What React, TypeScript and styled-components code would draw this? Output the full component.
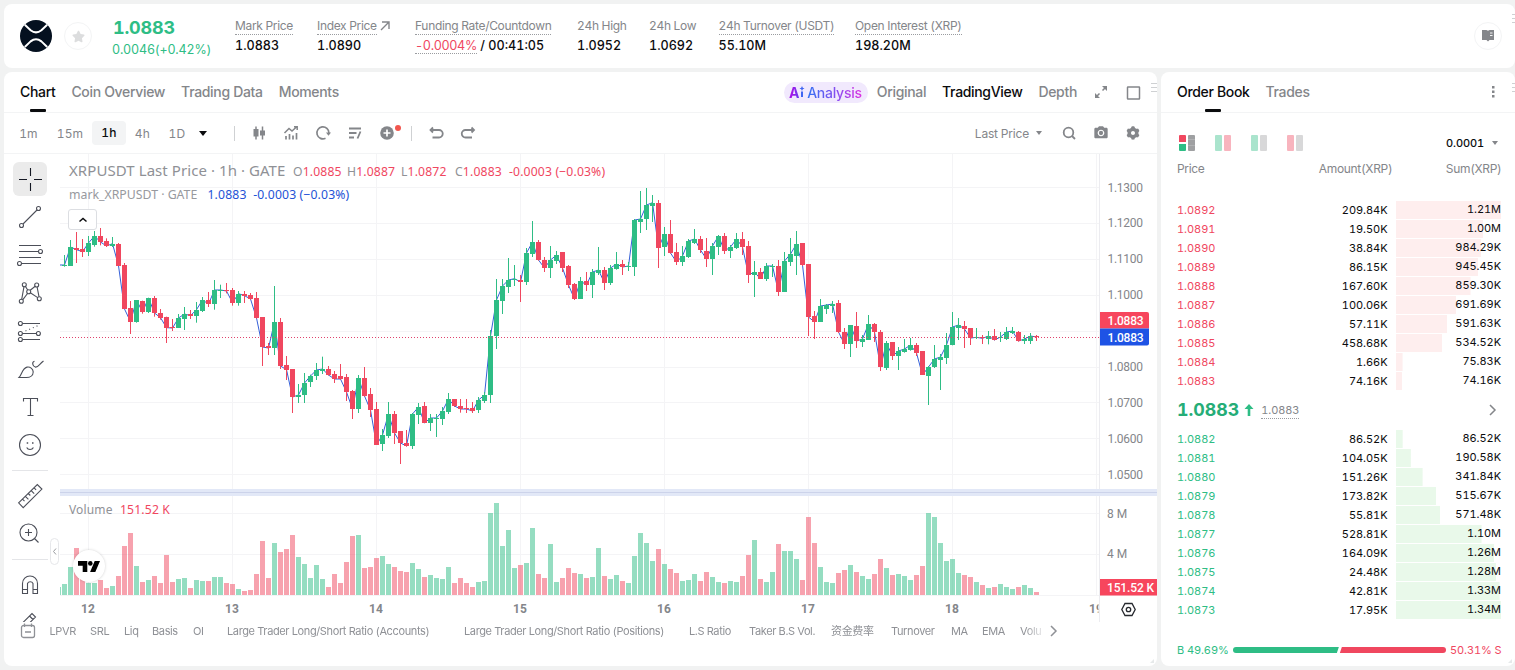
import type { ReactNode } from 'react';
import styled, { createGlobalStyle } from 'styled-components';
import { MdPhotoCamera } from 'react-icons/md';
import { RiSettings3Fill } from 'react-icons/ri';
import { FaStar } from 'react-icons/fa';

const GREEN = '#2ebd85';
const RED = '#f0475f';
const GREY = '#84868a';
const UI_FONT = 'Inter, "Liberation Sans", "Noto Sans CJK SC", sans-serif';
const CHART_FONT = '"Noto Sans", "Open Sans", sans-serif';

// [up, wick top, body top, body bottom, wick bottom, volume], in thirds of a pixel
const CANDLES: number[][] = [
  [1, 315, 345, 347, 350, 33], [1, 270, 291, 347, 347, 84], [0, 246, 294, 299, 339, 141], [0, 267, 297, 305, 321, 55],
  [1, 258, 279, 305, 318, 36], [1, 243, 258, 284, 290, 36], [0, 234, 258, 276, 286, 45], [0, 265, 273, 288, 291, 21],
  [1, 261, 281, 288, 291, 27], [0, 279, 282, 347, 347, 57], [0, 339, 345, 477, 477, 147], [0, 453, 474, 515, 552, 186],
  [1, 450, 450, 516, 518, 87], [0, 452, 453, 486, 491, 39], [1, 443, 444, 486, 489, 45], [0, 438, 444, 489, 500, 57],
  [0, 477, 489, 503, 509, 36], [0, 500, 501, 533, 579, 120], [0, 507, 530, 534, 543, 39], [1, 492, 504, 533, 534, 48],
  [1, 471, 492, 507, 540, 51], [0, 480, 493, 497, 507, 21], [1, 456, 479, 498, 518, 45], [1, 441, 450, 483, 486, 42],
  [0, 426, 450, 462, 471, 42], [1, 390, 420, 462, 479, 54], [1, 404, 420, 422, 444, 54], [0, 399, 420, 423, 430, 36],
  [0, 414, 420, 458, 467, 33], [1, 423, 431, 459, 467, 18], [0, 423, 432, 437, 459, 12], [0, 429, 435, 447, 449, 15],
  [0, 426, 444, 504, 506, 63], [0, 501, 501, 591, 648, 162], [0, 579, 588, 594, 615, 51], [1, 408, 516, 594, 615, 156],
  [0, 504, 516, 648, 657, 129], [0, 618, 645, 659, 690, 138], [0, 657, 657, 741, 789, 180], [1, 702, 735, 741, 759, 114],
  [1, 669, 699, 735, 759, 93], [1, 674, 678, 696, 711, 51], [1, 639, 660, 678, 690, 90], [1, 620, 657, 663, 672, 48],
  [0, 648, 657, 675, 677, 24], [0, 663, 672, 687, 699, 63], [0, 642, 678, 687, 689, 36], [0, 672, 681, 726, 753, 99],
  [0, 720, 723, 777, 807, 177], [1, 675, 684, 777, 789, 180], [0, 651, 684, 738, 740, 81], [0, 714, 732, 780, 801, 84],
  [0, 756, 777, 885, 885, 111], [1, 837, 855, 882, 903, 117], [1, 756, 792, 858, 864, 93], [0, 783, 792, 849, 882, 84],
  [0, 843, 843, 879, 942, 72], [0, 840, 879, 888, 890, 69], [1, 789, 792, 888, 897, 96], [1, 759, 771, 795, 822, 78],
  [0, 756, 768, 819, 819, 54], [1, 792, 804, 819, 843, 60], [1, 792, 804, 807, 861, 51], [1, 771, 783, 807, 825, 48],
  [1, 729, 747, 786, 792, 84], [0, 747, 747, 768, 771, 36], [0, 747, 768, 777, 788, 51], [0, 747, 774, 777, 789, 36],
  [0, 756, 774, 783, 789, 24], [1, 741, 750, 780, 789, 39], [1, 726, 735, 753, 759, 42], [1, 540, 558, 735, 759, 246],
  [1, 387, 450, 558, 597, 276], [1, 387, 408, 453, 492, 147], [1, 324, 390, 411, 429, 195], [1, 345, 386, 389, 408, 81],
  [0, 375, 390, 396, 456, 90], [1, 294, 309, 396, 405, 96], [1, 213, 276, 312, 321, 201], [0, 270, 276, 330, 332, 63],
  [0, 321, 330, 354, 366, 51], [1, 288, 330, 354, 384, 153], [1, 303, 315, 333, 342, 39], [0, 306, 306, 354, 366, 51],
  [0, 345, 348, 405, 414, 81], [0, 399, 402, 447, 450, 66], [1, 381, 393, 447, 447, 63], [0, 366, 393, 405, 423, 51],
  [1, 357, 366, 405, 444, 54], [1, 291, 360, 369, 375, 141], [0, 351, 360, 399, 420, 57], [1, 345, 354, 399, 405, 48],
  [1, 306, 342, 357, 359, 60], [0, 330, 342, 351, 375, 42], [1, 336, 348, 351, 363, 36], [1, 207, 210, 351, 378, 117],
  [1, 123, 207, 216, 249, 186], [1, 114, 165, 207, 240, 156], [1, 135, 158, 168, 216, 102], [0, 150, 159, 294, 354, 138],
  [1, 231, 252, 291, 318, 93], [0, 210, 252, 309, 311, 78], [0, 279, 306, 336, 345, 66], [1, 288, 318, 336, 348, 42],
  [1, 267, 273, 321, 324, 45], [1, 237, 267, 279, 282, 63], [0, 258, 267, 300, 309, 42], [0, 264, 303, 327, 351, 69],
  [1, 279, 288, 327, 375, 54], [1, 255, 258, 291, 315, 39], [0, 249, 258, 303, 312, 36], [1, 285, 291, 303, 324, 42],
  [1, 249, 267, 294, 297, 39], [0, 246, 267, 291, 315, 57], [0, 273, 288, 375, 399, 120], [1, 333, 366, 375, 441, 165],
  [0, 354, 366, 387, 387, 48], [1, 339, 348, 387, 393, 39], [1, 342, 348, 351, 381, 69], [0, 330, 348, 426, 438, 153],
  [1, 306, 333, 426, 426, 132], [1, 264, 312, 336, 348, 132], [1, 243, 282, 318, 375, 108], [0, 279, 279, 345, 348, 45],
  [0, 342, 342, 501, 558, 234], [0, 483, 498, 516, 567, 156], [1, 447, 468, 516, 516, 84], [1, 462, 465, 477, 492, 39],
  [1, 453, 462, 468, 489, 36], [0, 450, 459, 546, 549, 66], [0, 534, 546, 582, 597, 75], [1, 525, 525, 582, 621, 90],
  [0, 486, 528, 573, 594, 69], [1, 555, 567, 576, 591, 57], [1, 495, 522, 570, 570, 48], [0, 519, 522, 546, 576, 63],
  [0, 540, 546, 651, 663, 108], [1, 573, 579, 654, 660, 81], [0, 576, 576, 618, 630, 60], [1, 591, 603, 618, 660, 63],
  [1, 567, 597, 606, 608, 57], [1, 564, 585, 600, 602, 45], [0, 579, 585, 609, 618, 60], [0, 603, 603, 675, 675, 87],
  [1, 648, 651, 678, 765, 246], [1, 585, 627, 651, 654, 234], [1, 612, 621, 630, 720, 156], [1, 549, 585, 624, 642, 102],
  [1, 486, 531, 585, 586, 108], [1, 504, 525, 534, 570, 66], [0, 513, 528, 537, 594, 60], [0, 534, 534, 564, 585, 54],
  [1, 534, 562, 564, 567, 39], [0, 555, 562, 565, 582, 30], [1, 543, 558, 567, 583, 21], [0, 537, 558, 570, 571, 24],
  [1, 546, 561, 564, 576, 33], [1, 531, 546, 567, 570, 24], [1, 531, 543, 549, 552, 18], [0, 543, 546, 573, 575, 24],
  [1, 555, 567, 573, 582, 30], [1, 549, 558, 573, 582, 21], [0, 555, 558, 561, 573, 9],
];

const PRICE_LINES = ['1.1300', '1.1200', '1.1100', '1.1000', '', '1.0800', '1.0700', '1.0600', '1.0500'];
const DAYS = ['12', '13', '14', '15', '16', '17', '18', '19'];

// price, amount, running sum, running sum in thousands
type Level = [string, string, string, number];

const ASKS: Level[] = [
  ['1.0892', '209.84K', '1.21M', 1210],
  ['1.0891', '19.50K', '1.00M', 1003],
  ['1.0890', '38.84K', '984.29K', 984],
  ['1.0889', '86.15K', '945.45K', 945],
  ['1.0888', '167.60K', '859.30K', 859],
  ['1.0887', '100.06K', '691.69K', 692],
  ['1.0886', '57.11K', '591.63K', 592],
  ['1.0885', '458.68K', '534.52K', 535],
  ['1.0884', '1.66K', '75.83K', 76],
  ['1.0883', '74.16K', '74.16K', 74],
];

const BIDS: Level[] = [
  ['1.0882', '86.52K', '86.52K', 86],
  ['1.0881', '104.05K', '190.58K', 191],
  ['1.0880', '151.26K', '341.84K', 342],
  ['1.0879', '173.82K', '515.67K', 516],
  ['1.0878', '55.81K', '571.48K', 571],
  ['1.0877', '528.81K', '1.10M', 1100],
  ['1.0876', '164.09K', '1.26M', 1264],
  ['1.0875', '24.48K', '1.28M', 1289],
  ['1.0874', '42.81K', '1.33M', 1331],
  ['1.0873', '17.95K', '1.34M', 1349],
];

const INDICATORS = [
  'LPVR', 'SRL', 'Liq', 'Basis', 'OI', 'Large Trader Long/Short Ratio (Accounts)',
  'Large Trader Long/Short Ratio (Positions)', 'L.S Ratio', 'Taker B.S Vol.', '资金费率', 'Turnover', 'MA', 'EMA', 'Volu',
];

const GlobalStyle = createGlobalStyle`
  * { box-sizing: border-box; }
  body {
    margin: 0;
    background: #f1f2f2;
    font-family: ${UI_FONT};
    font-variant-numeric: tabular-nums;
    color: #0b0c0e;
    overflow: hidden;
  }
  svg { display: block; flex: none; }
`;

const Page = styled.div`
  width: 1515px;
  height: 670px;
  padding: 4px 0 4px 4px;
  display: grid;
  grid-template: 64px 594px / 1153px 1fr;
  gap: 4px;
`;

const Card = styled.section`
  background: #fff;
  border-radius: 8px;
  overflow: hidden;
  min-width: 0;
`;

const Header = styled(Card)`
  grid-column: 1 / -1;
  display: flex;
  align-items: center;
  padding-left: 16px;
  position: relative;
`;

const RoundButton = styled.div`
  width: 28px;
  height: 28px;
  border: 1px solid #f3f4f5;
  border-radius: 50%;
  display: flex;
  align-items: center;
  justify-content: center;
  color: #dcddde;
`;

const StarButton = styled(RoundButton)`
  margin: 0 21px 0 12px;
`;

const GuideButton = styled(RoundButton)`
  margin: 0 13px 0 auto;
  color: ${GREY};
`;

const Quote = styled.div`
  width: 122px;
  color: ${GREEN};
`;

const QuotePrice = styled.div`
  font-size: 18px;
  font-weight: 700;
  line-height: 24px;
  letter-spacing: -0.2px;
  padding-top: 3px;
`;

const QuoteChange = styled.div`
  font-size: 12.5px;
  letter-spacing: -0.18px;
  line-height: 20px;
  margin-left: -1px;
`;

const Stats = styled.dl`
  margin: 0 0 2px;
  display: grid;
  grid-template-columns: 82px 98px 162px 72px 69.5px 136.5px auto;
`;

const Stat = styled.div`
  white-space: nowrap;
`;

const StatLabel = styled.dt<{ $dotted?: boolean }>`
  display: flex;
  gap: 3px;
  font-size: 12px;
  line-height: 17px;
  letter-spacing: -0.32px;
  color: ${GREY};

  span {
    height: 18px;
    border-bottom: 1px ${p => (p.$dotted ? 'dotted #9a9ca0' : 'solid transparent')};
  }
`;

const StatValue = styled.dd`
  margin: 0;
  padding-top: 2px;
  font-size: 12.6px;
  font-weight: 500;
  line-height: 17px;

  em {
    display: inline-block;
    height: 17px;
    border-bottom: 1px dotted #9a9ca0;
    font-style: normal;
    font-weight: 400;
    letter-spacing: -0.35px;
    color: ${RED};
  }
`;

const Grip = styled.div<{ $right: number; $top: number }>`
  position: absolute;
  right: ${p => p.$right}px;
  top: ${p => p.$top}px;
  width: 6px;
  height: 10px;
  background: repeating-linear-gradient(#cfd1d3 0 1px, transparent 1px 4px);
`;

const ResizeCorner = styled.div`
  position: absolute;
  right: 3px;
  bottom: 3px;
  border: 2px solid;
  border-color: transparent #e6e9ea #e6e9ea transparent;
`;

const Panel = styled(Card)`
  position: relative;
  display: flex;
  flex-direction: column;
`;

const TabBar = styled.nav`
  height: 41px;
  flex: none;
  padding: 0 16px;
  display: flex;
  gap: 16px;
  border-bottom: 1px solid #f3f4f5;
`;

const Tab = styled.span<{ $active?: boolean }>`
  position: relative;
  font-size: 14px;
  font-weight: 500;
  line-height: 40px;
  letter-spacing: -0.33px;
  white-space: nowrap;
  color: ${p => (p.$active ? '#0b0c0e' : GREY)};
`;

const MarkedTab = styled(Tab)`
  &::after {
    content: '';
    position: absolute;
    left: calc(50% - 8px);
    top: 37px;
    width: 16px;
    height: 3px;
    border-radius: 1px;
    background: #0b0c0e;
  }
`;

const Views = styled.div`
  margin-left: auto;
  display: flex;
  align-items: center;
  gap: 16px;
  color: ${GREY};
`;

const AiPill = styled.span`
  height: 21px;
  margin-right: -7px;
  padding: 0 6px 0 5px;
  display: flex;
  align-items: center;
  border-radius: 11px;
  background: #f1e9fd;
  font-size: 14px;
  font-weight: 500;
  letter-spacing: -0.25px;

  b {
    font-weight: 700;
    background: linear-gradient(90deg, #a316e8 30%, #6a3cf0);
    background-clip: text;
    color: transparent;
  }
  svg {
    margin-right: 2px;
    color: #3f66f2;
  }
  span {
    background: linear-gradient(90deg, #3071f3, #8a4cf0 55%, #dd2fe0);
    background-clip: text;
    color: transparent;
  }
`;

const Toolbar = styled.div`
  height: 41px;
  flex: none;
  display: flex;
  align-items: center;
  border-bottom: 1px solid #f3f4f5;
  padding-right: 16px;
  color: ${GREY};
`;

const Intervals = styled.div`
  display: grid;
  grid-template-columns: 41px 42px 36px 31px 38px 14px;
  align-items: center;
  justify-items: center;
  margin: 0 24px 0 4px;
  font-size: 12px;
  letter-spacing: 0.2px;
`;

const ActiveInterval = styled.span`
  width: 34px;
  height: 24px;
  border-radius: 4px;
  background: #f3f4f5;
  line-height: 24px;
  text-align: center;
  font-weight: 500;
  color: #0b0c0e;
`;

const Caret = styled.i<{ $size: number; $color: string }>`
  border: ${p => p.$size}px solid transparent;
  border-top: ${p => p.$size + 1}px solid ${p => p.$color};
  border-bottom: 0;
`;

const Divider = styled.i`
  width: 1px;
  height: 15px;
  background: #cfd1d3;
`;

const Tools = styled.div`
  display: flex;
  align-items: center;
  gap: 16px;
  margin: 0 16px;
`;

const Notified = styled.div`
  position: relative;

  &::after {
    content: '';
    position: absolute;
    right: -6px;
    top: 0;
    width: 6px;
    height: 6px;
    border-radius: 50%;
    background: #f2564e;
  }
`;

const PriceSource = styled.div`
  margin-left: auto;
  display: flex;
  align-items: center;
  gap: 7px;
  font-size: 12px;
  letter-spacing: -0.2px;
`;

const ToolbarRight = styled.div`
  display: flex;
  gap: 16px;
  margin-left: 19px;
`;

const ChartArea = styled.div`
  height: 468px;
  flex: none;
  display: flex;
  position: relative;
`;

const Rail = styled.aside`
  width: 56px;
  padding: 8px 0 0 9px;
  display: flex;
  flex-direction: column;
  gap: 4px;
  overflow: hidden;
`;

const RailButton = styled.div<{ $active?: boolean }>`
  width: 34px;
  height: 34px;
  flex: none;
  border-radius: 6px;
  background: ${p => (p.$active ? '#ebebeb' : 'transparent')};
  color: ${p => (p.$active ? '#131722' : '#4c4f59')};
`;

const RailRule = styled.hr`
  width: 36px;
  flex: none;
  margin: 4px 0 4px -1px;
  border: 0;
  border-top: 1px solid #e4e5e8;
`;

const RailHandle = styled.div`
  position: absolute;
  left: 46px;
  top: 384px;
  width: 9px;
  height: 27px;
  border: 1px solid #e6e7ea;
  border-radius: 5px;
  background: #fff;
  color: #9a9ca0;
`;

const Legend = styled.div<{ $top: number; $color: string }>`
  position: absolute;
  left: 65px;
  top: ${p => p.$top}px;
  display: flex;
  align-items: baseline;
  line-height: 20px;
  font-family: ${CHART_FONT};
  font-size: 12.2px;
  letter-spacing: 0.15px;
  white-space: nowrap;
  color: ${p => p.$color};

  i {
    font-style: normal;
    color: #8f9196;
  }
`;

const SymbolName = styled.span`
  width: 224px;
  font-size: 15px;
  letter-spacing: 0.07px;
  color: #8f9196;
`;

const MarkName = styled.span`
  width: 138.5px;
  font-size: 12.3px;
  letter-spacing: 0;
  color: #97999e;
`;

const VolumeName = styled.span`
  width: 51px;
  font-size: 12px;
  color: #8f9196;
`;

const Ohlc = styled.span`
  width: 54px;
`;

const LegendToggle = styled.div`
  position: absolute;
  left: 64px;
  top: 55px;
  width: 29px;
  height: 21px;
  border: 1px solid #dcdee2;
  border-radius: 3px;
  background: #fff;
  display: flex;
  align-items: center;
  justify-content: center;
`;

const ChartLogo = styled.div`
  position: absolute;
  left: 69px;
  top: 396px;
  width: 32px;
  height: 32px;
  border-radius: 50%;
  background: #fff;
  box-shadow: 0 0 3px rgba(0, 0, 0, 0.18);
  display: flex;
  align-items: center;
  justify-content: center;
`;

const IndicatorBar = styled.div`
  display: flex;
  align-items: center;
  height: 18px;
  color: #8f9196;
`;

const CalendarSlot = styled.div`
  padding-left: 16px;
  width: 32px;
`;

const IndicatorList = styled.div`
  margin-left: 13.5px;
  width: 997px;
  overflow: hidden;
  display: grid;
  grid-template-columns: 40.5px 34px 28px 41px 34px 237px 225px 60px 82px 60px 60px 31px 38px 26px;
  font-size: 11px;
  letter-spacing: -0.37px;
  line-height: 18px;
  white-space: nowrap;
  mask-image: linear-gradient(90deg, #000 975px, transparent);
`;

const BookModes = styled.div`
  display: flex;
  align-items: center;
  height: 16px;
  margin: 22px 17px 0 18px;
  gap: 20px;
`;

const Mode = styled.span<{ $left: string; $right: string; $dim?: boolean }>`
  display: flex;
  gap: 2px;
  opacity: ${p => (p.$dim ? 0.4 : 1)};

  &::before,
  &::after {
    content: '';
    width: 7px;
    height: 16px;
    border-radius: 1px;
    background: ${p => p.$left};
  }
  &::after {
    background: ${p => p.$right};
  }
`;

const Precision = styled.span`
  margin-left: auto;
  display: flex;
  align-items: center;
  gap: 8px;
  font-size: 11px;
  font-weight: 500;
  letter-spacing: -0.1px;
`;

const BookColumns = styled.div`
  display: grid;
  grid-template-columns: 100px 115.3px 109.2px;
  margin: 9px 0 0 16px;
  line-height: 18px;
  font-size: 12px;
  letter-spacing: -0.32px;
  color: ${GREY};

  span + span {
    text-align: right;
  }
`;

const BookSide = styled.div<{ $color: string; $tint: string }>`
  display: grid;
  grid-auto-rows: 19px;
  color: ${p => p.$color};
  --tint: ${p => p.$tint};
`;

const AskSide = styled(BookSide)`
  margin-top: 23px;
`;

const BookRow = styled.div`
  display: grid;
  grid-template-columns: 100px 110.5px 8.5px 105px;
  margin-left: 16px;
  font-size: 11px;
  line-height: 19px;
  letter-spacing: -0.05px;
`;

const Amount = styled.span`
  grid-column: 2;
  text-align: right;
  color: #0b0c0e;
`;

const Depth = styled.span`
  grid-column: 4;
  height: 18px;
  line-height: 17px;
  text-align: right;
  color: #0b0c0e;
  background: linear-gradient(var(--tint), var(--tint)) no-repeat;
`;

const LastTrade = styled.div`
  display: flex;
  align-items: center;
  height: 39px;
  margin: 0 15px 0 16px;
  padding-bottom: 1px;
  color: ${GREY};
`;

const LastPrice = styled.strong`
  font-size: 17.8px;
  line-height: 24px;
  color: #25ad77;
  margin-right: 5px;
`;

const MarkPrice = styled.span`
  margin: 0 auto 0 7px;
  height: 17px;
  font-size: 11px;
  line-height: 16px;
  letter-spacing: -0.1px;
  border-bottom: 1px dotted #9a9ca0;
`;

const Ratio = styled.div`
  display: flex;
  align-items: center;
  margin: 20px 13px 0 16px;
  font-size: 11px;
  line-height: 20px;
`;

const RatioLabel = styled.span<{ $color: string; $width: number }>`
  width: ${p => p.$width}px;
  white-space: nowrap;
  letter-spacing: -0.1px;
  color: ${p => p.$color};
`;

const RatioBar = styled.div`
  flex: 1;
  display: flex;
  height: 6px;
  margin-right: 4px;
`;

const BuyShare = styled.i`
  flex: 49.69;
  background: ${GREEN};
  border-radius: 3px 0 0 3px;
  clip-path: polygon(0 0, 100% 0, calc(100% - 2px) 100%, 0 100%);
`;

const SellShare = styled.i`
  flex: 50.31;
  background: ${RED};
  border-radius: 0 3px 3px 0;
  clip-path: polygon(3px 0, 100% 0, 100% 100%, 1px 100%);
`;

const Icon = ({ size = 16, width = 1.5, children }: { size?: number; width?: number; children: ReactNode }) => (
  <svg width={size} height={size} viewBox={`0 0 ${size} ${size}`} fill="none" stroke="currentColor" strokeWidth={width}>
    {children}
  </svg>
);

const XrpLogo = () => (
  <svg width="32" height="32" viewBox="0 0 32 32">
    <circle cx="16" cy="16" r="16" fill="#04101f" />
    <g fill="none" stroke="#fff" strokeWidth="2">
      <path d="M4.8 4.8 10.6 10.2Q16 14.6 21.4 10.2L27.2 4.8" />
      <path d="M4.8 27 10.6 21.4Q16 17 21.4 21.4L27.2 27" />
    </g>
  </svg>
);

const DRAW_TOOLS: ReactNode[] = [
  <path d="M17.5 6v8M17.5 21v8M6 17.5h8M21 17.5h8" />,
  <>
    <circle cx="8.5" cy="25.5" r="2" />
    <circle cx="25.5" cy="8.5" r="2" />
    <path d="M10 24 24 10" />
  </>,
  <>
    <path d="M6 7.5h22M6 13.5h19.5M6 19.5h22M8.5 25.5H28" />
    <circle cx="27.5" cy="13.5" r="2" />
    <circle cx="6.5" cy="25.5" r="2" />
  </>,
  <>
    <path d="m8.7 23.3 2.3-12.6M12.5 10.5l2.2 3.5M17.2 14.2l5-4M24.1 11l1.9 9.6M9.7 23.8l4.8-6.3M17.3 16.8l7.4 4.8" />
    <circle cx="11.3" cy="8.7" r="2" />
    <circle cx="23.7" cy="9" r="2" />
    <circle cx="15.7" cy="15.7" r="2" />
    <circle cx="8.3" cy="25.3" r="2" />
    <circle cx="26.3" cy="22.7" r="2" />
  </>,
  <>
    <path d="M9.5 9.5H27M9.5 19.5h14M9.5 25.5H27" />
    <path d="m12.5 17 14-6" strokeDasharray="1 3" />
    <circle cx="7.4" cy="9.5" r="2" />
    <circle cx="7.4" cy="19.5" r="2" />
    <circle cx="25.4" cy="19.5" r="2" />
    <circle cx="7.4" cy="25.5" r="2" />
  </>,
  <>
    <path d="M6 25.5C9 22.5 9 16.5 14 15.1a5.2 5.2 0 0 1 6.2 4.8c0 3.6-3.2 5.6-6.7 5.6z" />
    <path d="M21.5 9.2c-3 .6-1.9 5 .8 5.9C25 15.8 26 12.5 30.5 9" />
  </>,
  <path d="M10.5 11.5v-3h14v3M17.5 8.5v17M14.5 25.5h6" />,
  <>
    <circle cx="17" cy="17" r="10.5" />
    <path d="M13.7 19.5c1.2 2.6 5.5 2.6 6.7 0" />
    <path d="M13.7 15h1.5M19 15h1.5" strokeWidth="1.6" />
  </>,
];

const MEASURE_TOOLS: ReactNode[] = [
  <path d="M5.6 23.8 24.3 5.5l4.6 4.6L10.2 28.6zM9.5 20.2l2 2M12.4 17.3l3 3M15.3 14.5l2 2M18.2 11.6l3 3M21.1 8.8l2 2" />,
  <>
    <circle cx="15.5" cy="15.5" r="8.5" />
    <path d="M15.5 12v7M12 15.5h7M21.5 21.5l4 4" />
  </>,
];

const MODE_TOOLS: ReactNode[] = [
  <path d="M9.5 25.5v-10a7.5 7.5 0 0 1 15 0v10H20v-10a3 3 0 0 0-5.5 0v10zM9.5 21.5h5M20 21.5h4.5" />,
  <path d="M8 18.5 19 7.5l3.5 3.5-8 8M16.5 10l3.5 3.5M20.5 16.5h4" />,
];

const DrawingRail = () => (
  <Rail>
    {DRAW_TOOLS.map((icon, i) => (
      <RailButton key={i} $active={i === 0}><Icon size={34} width={1.1}>{icon}</Icon></RailButton>
    ))}
    <RailRule />
    {MEASURE_TOOLS.map((icon, i) => (
      <RailButton key={i}><Icon size={34} width={1.1}>{icon}</Icon></RailButton>
    ))}
    <RailRule />
    {MODE_TOOLS.map((icon, i) => (
      <RailButton key={i}><Icon size={34} width={1.1}>{icon}</Icon></RailButton>
    ))}
  </Rail>
);

const candleX = (i: number) => 64.5 + i * 6;
const candleY = (v: number) => 150 + v / 3;

const PriceChart = () => {
  const line = CANDLES.map(([up, , top, bottom], i) => `${candleX(i)},${candleY(up ? top : bottom)}`).join(' ');

  return (
    <svg width="1097" height="468" viewBox="60 154 1097 468" fontFamily="Roboto, sans-serif" fontSize="12" fill="#84868a">
      <g stroke="#f4f4f6">
        {PRICE_LINES.map((_, i) => (
          <path key={i} d={`M60 ${Math.round(187 + i * 35.9) + 0.5}H1099`} />
        ))}
        {DAYS.map((day, i) => (
          <path key={day} d={`M${88.5 + i * 144} 154V595`} />
        ))}
        <path d="M60 513.5H1099M60 554.5H1099M60 595.5H1157" />
        <path d="M1099.5 154V622" stroke="#ececf0" />
      </g>
      <rect x="60" y="489" width="1097" height="7" fill="#e2e8f7" />
      <path d="M60 492.5H1157" stroke="#ccd3ea" />

      <g opacity="0.5">
        <rect x="60" y="587" width="1" height="8" fill={GREEN} />
        {CANDLES.map(([up, , , , , volume], i) => (
          <rect key={i} x={candleX(i) - 2.5} y={595 - volume / 3} width="5" height={volume / 3} fill={up ? GREEN : RED} />
        ))}
      </g>

      <polyline points={`60,265 ${line}`} fill="none" stroke="#3560d8" />
      {CANDLES.map(([up, high, top, bottom, low], i) => (
        <g key={i} fill={up ? GREEN : RED}>
          <rect x={candleX(i) - 0.5} y={candleY(high)} width="1" height={(low - high) / 3} />
          <rect
            x={candleX(i) - 2.5}
            y={Math.round(candleY(top))}
            width="5"
            height={Math.max(1, Math.round(candleY(bottom)) - Math.round(candleY(top)))}
          />
        </g>
      ))}
      <path d="M60 337.5H1099" stroke="#e0426c" strokeDasharray="1 2" />

      {PRICE_LINES.map((label, i) => (
        <text key={i} x="1107.5" y={191.5 + i * 35.9} textLength={label ? 35.5 : undefined}>{label}</text>
      ))}
      <text x="1107" y="517.5">8 M</text>
      <text x="1107" y="557.5">4 M</text>
      <clipPath id="time-axis"><rect x="60" y="596" width="1038.5" height="26" /></clipPath>
      <g clipPath="url(#time-axis)" fontWeight="700" textAnchor="middle">
        {DAYS.map((day, i) => (
          <text key={day} x={88 + i * 144} y="613">{day}</text>
        ))}
      </g>

      <path d="M1100 312h47a2 2 0 0 1 2 2v14.5h-49z" fill="#f7465d" />
      <path d="M1100 328.5h49v15a2 2 0 0 1-2 2h-47z" fill="#1e53e5" />
      <rect x="1100" y="579" width="57" height="16.5" fill="#f7465d" />
      <g fill="#fff" fontWeight="500">
        <text x="1107.5" y="324.7" textLength="36">1.0883</text>
        <text x="1107.5" y="341.7" textLength="36">1.0883</text>
        <text x="1107" y="591.7" textLength="47">151.52 K</text>
      </g>
      <g fill="none" stroke="#26282e" strokeWidth="1.3">
        <path d="m1125 603.5h7l3.2 6-3.2 6h-7l-3.2-6z" />
        <circle cx="1128.5" cy="609.5" r="2.2" />
      </g>
    </svg>
  );
};

const ChartToolbar = () => (
  <Toolbar>
    <Intervals>
      <span>1m</span>
      <span>15m</span>
      <ActiveInterval>1h</ActiveInterval>
      <span>4h</span>
      <span>1D</span>
      <Caret $size={4} $color="#0b0c0e" />
    </Intervals>
    <Divider />
    <Tools>
      <Icon>
        <path d="M5 1.5v13M11.5 1.5v13" />
        <path d="M2.5 4h5v7.5h-5zM9 5.5h5v5H9z" fill="currentColor" stroke="none" />
      </Icon>
      <Icon>
        <path d="M1.5 8 6 3.5l3 2.5 5-4.5M11 1.8h3.2V5" />
        <path d="M3 11v3.5M6.5 9v5.5M10 10.5v4M13.5 8v6.5" strokeWidth="1.7" />
      </Icon>
      <Icon width={1.7}>
        <path d="M10.5 13.3A6 6 0 1 1 13.9 8" />
        <path d="M11 7.5h5l-2.5 3.2z" fill="currentColor" stroke="none" />
      </Icon>
      <Icon width={1.8}>
        <path d="M2 3.5h12M2 8h7.5M2 12.5h5M13.5 6.5l-3 7" />
      </Icon>
      <Notified>
        <Icon>
          <circle cx="8" cy="8" r="6.8" fill="currentColor" stroke="none" />
          <path d="M8 4.5v7M4.5 8h7" stroke="#fff" strokeWidth="1.7" />
        </Icon>
      </Notified>
    </Tools>
    <Divider />
    <Tools>
      <Icon width={1.8}>
        <path d="M2.5 5H11a3.3 3.3 0 0 1 0 7.5H4.5M5 2.5 2.5 5 5 7.5" />
      </Icon>
      <Icon width={1.8}>
        <path d="M14 5H5.500a3.3 3.3 0 0 0 0 7.5H12M11.5 2.5 14 5l-2.5 2.5" />
      </Icon>
    </Tools>
    <PriceSource>
      Last Price <Caret $size={3} $color={GREY} />
    </PriceSource>
    <ToolbarRight>
      <Icon width={1.8}>
        <circle cx="7.5" cy="7.5" r="4.8" />
        <path d="m11 11 3 3" />
      </Icon>
      <MdPhotoCamera size={16} />
      <RiSettings3Fill size={16} />
    </ToolbarRight>
  </Toolbar>
);

const ChartPanel = () => (
  <Panel>
    <TabBar>
      <MarkedTab $active>Chart</MarkedTab>
      <Tab>Coin Overview</Tab>
      <Tab>Trading Data</Tab>
      <Tab>Moments</Tab>
      <Views>
        <AiPill>
          <b>A</b>
          <svg width="6" height="12" viewBox="0 0 6 12" fill="currentColor">
            <path d="M2 5.5h2V11H2zM3 0l.8 1.7 1.7.8-1.7.8L3 5l-.8-1.7-1.7-.8 1.7-.8z" />
          </svg>
          <span>Analysis</span>
        </AiPill>
        <Tab>Original</Tab>
        <Tab $active>TradingView</Tab>
        <Tab>Depth</Tab>
        <Icon>
          <path d="M9.5 6.5 13 3M6.5 9.5 3 13" />
          <path d="M9 2h5v5zM2 9v5h5z" fill="currentColor" stroke="none" />
        </Icon>
        <Icon>
          <rect x="2.5" y="3" width="12" height="12" rx="0.5" />
        </Icon>
      </Views>
    </TabBar>
    <ChartToolbar />
    <ChartArea>
      <DrawingRail />
      <PriceChart />
      <Legend $top={6} $color={RED}>
        <SymbolName>XRPUSDT Last Price · 1h · GATE</SymbolName>
        <Ohlc><i>O</i>1.0885</Ohlc>
        <Ohlc><i>H</i>1.0887</Ohlc>
        <Ohlc><i>L</i>1.0872</Ohlc>
        <Ohlc><i>C</i>1.0883</Ohlc>
        <span>-0.0003 (−0.03%)</span>
      </Legend>
      <Legend $top={31} $color="#2453d6">
        <MarkName>mark_XRPUSDT · GATE</MarkName>
        <span>1.0883&nbsp; -0.0003 (−0.03%)</span>
      </Legend>
      <LegendToggle>
        <Icon size={10}><path d="M1.5 6.5 5 3.5l3.5 3" /></Icon>
      </LegendToggle>
      <Legend $top={346} $color={RED}>
        <VolumeName>Volume</VolumeName>
        <span>151.52 K</span>
      </Legend>
      <ChartLogo>
        <svg width="22" height="11" viewBox="0 0 22 11">
          <path d="M0 0h9.3v11H4.7V4.7H0zM16.7 0H22l-4.7 11h-5.2z" />
          <circle cx="12.3" cy="2.4" r="2.3" />
        </svg>
      </ChartLogo>
      <RailHandle>
        <svg width="7" height="25" viewBox="0 0 7 25" fill="none" stroke="currentColor">
          <path d="m5 9.5-2.5 3 2.5 3" />
        </svg>
      </RailHandle>
    </ChartArea>
    <IndicatorBar>
      <CalendarSlot>
        <Icon width={1.3}>
          <rect x="1.5" y="2.5" width="13" height="12" rx="2" />
          <path d="M4.5.5V4M11.5.5V4M5 9h6" />
        </Icon>
      </CalendarSlot>
      <IndicatorList>
        {INDICATORS.map(name => <span key={name}>{name}</span>)}
      </IndicatorList>
      <Icon><path d="m4 3 5 5-5 5" /></Icon>
    </IndicatorBar>
    <Grip $right={0} $top={11} />
    <ResizeCorner />
  </Panel>
);

const BookRows = ({ rows, max }: { rows: Level[]; max: number }) => (
  <>
    {rows.map(([price, amount, sum, depth]) => (
      <BookRow key={price}>
        <span>{price}</span>
        <Amount>{amount}</Amount>
        <Depth style={{ backgroundSize: `${(depth / max) * 100}% 100%` }}>{sum}</Depth>
      </BookRow>
    ))}
  </>
);

const OrderBook = () => (
  <Panel>
    <TabBar>
      <MarkedTab $active>Order Book</MarkedTab>
      <Tab>Trades</Tab>
      <Views>
        <svg width="12" height="16" viewBox="0 0 12 16" fill="currentColor">
          <path d="M5 2h2.5v2.5H5zM5 6.5h2.5V9H5zM5 11h2.5v2.5H5z" />
        </svg>
      </Views>
    </TabBar>
    <BookModes>
      <Mode
        $left={`linear-gradient(${RED} 7px, #fff 7px 9px, ${GREEN} 9px)`}
        $right="linear-gradient(#9fa0a2 4px, #b0b1b3 4px 5px, #9fa0a2 5px 10px, #b0b1b3 10px 11px, #9fa0a2 11px)"
      />
      <Mode $dim $left={GREEN} $right={RED} />
      <Mode $dim $left={GREEN} $right="#9fa0a2" />
      <Mode $dim $left={RED} $right="#9fa0a2" />
      <Precision>0.0001 <Caret $size={3} $color={GREY} /></Precision>
    </BookModes>
    <BookColumns>
      <span>Price</span>
      <span>Amount(XRP)</span>
      <span>Sum(XRP)</span>
    </BookColumns>
    <AskSide $color={RED} $tint="#feeeee"><BookRows rows={ASKS} max={1210} /></AskSide>
    <LastTrade>
      <LastPrice>1.0883</LastPrice>
      <svg width="10" height="14" viewBox="0 0 10 14" fill={GREEN}>
        <path d="M5 1l4.500 5H6.300v7H3.700V6H.5z" />
      </svg>
      <MarkPrice>1.0883</MarkPrice>
      <Icon><path d="m6 3 5 5-5 5" /></Icon>
    </LastTrade>
    <BookSide $color={GREEN} $tint="#e9f9ea"><BookRows rows={BIDS} max={1349} /></BookSide>
    <Ratio>
      <RatioLabel $color={GREEN} $width={56}>B 49.69%</RatioLabel>
      <RatioBar><BuyShare /><SellShare /></RatioBar>
      <RatioLabel $color={RED} $width={52}>50.31% S</RatioLabel>
    </Ratio>
    <Grip $right={-3} $top={11} />
    <ResizeCorner />
  </Panel>
);

const STATS: { label: string; value: ReactNode; dotted?: boolean; link?: boolean }[] = [
  { label: 'Mark Price', value: '1.0883', dotted: true },
  { label: 'Index Price', value: '1.0890', dotted: true, link: true },
  { label: 'Funding Rate/Countdown', value: <><em>-0.0004%</em> / 00:41:05</>, dotted: true },
  { label: '24h High', value: '1.0952' },
  { label: '24h Low', value: '1.0692' },
  { label: '24h Turnover (USDT)', value: '55.10M', dotted: true },
  { label: 'Open Interest (XRP)', value: '198.20M', dotted: true },
];

export default function App() {
  return (
    <>
      <GlobalStyle />
      <Page>
        <Header>
          <XrpLogo />
          <StarButton><FaStar size={13} /></StarButton>
          <Quote>
            <QuotePrice>1.0883</QuotePrice>
            <QuoteChange>0.0046(+0.42%)</QuoteChange>
          </Quote>
          <Stats>
            {STATS.map(({ label, value, dotted, link }) => (
              <Stat key={label}>
                <StatLabel $dotted={dotted}>
                  <span>{label}</span>
                  {link && (
                    <svg width="10" height="15" viewBox="0 0 10 15" fill="none" stroke="currentColor" strokeWidth="1.4">
                      <path d="M1 13 8.5 5.5M2 5h7v7" />
                    </svg>
                  )}
                </StatLabel>
                <StatValue>{value}</StatValue>
              </Stat>
            ))}
          </Stats>
          <GuideButton>
            <svg width="14" height="12" viewBox="0 0 14 12">
              <path d="M1 0h4q1.5 0 2 1 .5-1 2-1h4v10H8.5L7 11.5 5.5 10H1z" fill="currentColor" />
              <path d="M9 3h2.5M9 5.5h2.5" stroke="#fff" strokeWidth="0.9" />
            </svg>
          </GuideButton>
          <Grip $right={-3} $top={10} />
        </Header>
        <ChartPanel />
        <OrderBook />
      </Page>
    </>
  );
}
